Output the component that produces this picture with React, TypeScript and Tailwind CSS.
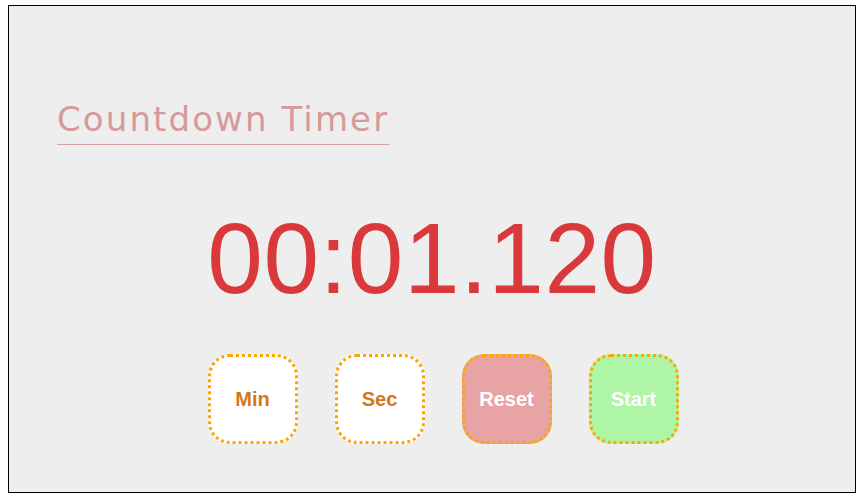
export default function App() {
  const buttons = [
    { label: "Min", className: "bg-white text-[#d2781a]" },
    { label: "Sec", className: "bg-white text-[#d2781a]" },
    { label: "Reset", className: "bg-[#e8a4a4] text-white" },
    { label: "Start", className: "bg-[#aef5a5] text-white" },
  ];

  return (
    <div className="min-h-screen bg-white pt-[5px] pl-2">
      <div className="w-[848px] h-[488px] border border-black bg-[#eeeeee] flex flex-col">
        <div className="pl-[48px] pt-[93px]">
          <h1
            className="inline-block text-[34px] leading-[40px] tracking-[2.1px] text-[#d69a9a] border-b border-[#d4a3a3] pb-[5px]"
            style={{ fontFamily: "'DejaVu Sans', Verdana, sans-serif" }}
          >
            Countdown Timer
          </h1>
        </div>

        <div
          className="mt-[63px] text-center text-[100px] leading-[100px] tracking-[0.5px] text-[#d9393b]"
          style={{ fontFamily: "'Liberation Sans', Arial, sans-serif" }}
        >
          00:01.120
        </div>

        <div className="mt-[46px] flex justify-center gap-[37px] pl-[22px]">
          {buttons.map((b) => (
            <button
              key={b.label}
              className={`w-[90px] h-[90px] rounded-[22px] border-[3px] border-dotted border-[#ffa500] text-[20px] font-bold flex items-center justify-center ${b.className}`}
              style={{ fontFamily: "'Liberation Sans', Arial, sans-serif" }}
            >
              {b.label}
            </button>
          ))}
        </div>
      </div>
    </div>
  );
}
